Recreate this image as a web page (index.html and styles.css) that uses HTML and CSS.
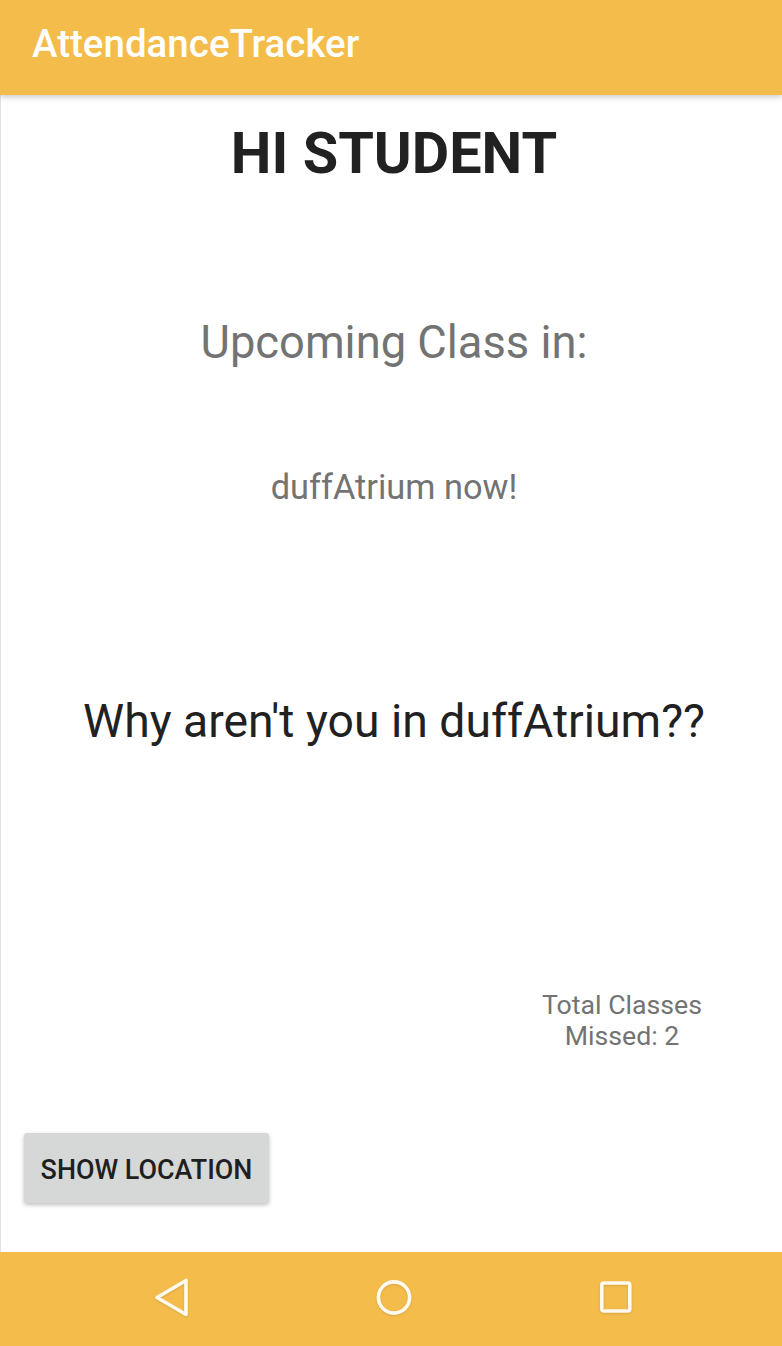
FILE: index.html
```html
<!DOCTYPE html>
<html>
<head>
<meta charset="utf-8">
<link rel="stylesheet" href="styles.css">
</head>
<body>
<div class="screen">
  <header class="appbar">
    <div class="appbar-title">AttendanceTracker</div>
  </header>
  <main class="content">
    <h1 class="greeting">HI STUDENT</h1>
    <div class="upcoming">Upcoming Class in:</div>
    <div class="location-now">duffAtrium now!</div>
    <div class="question">Why aren't you in duffAtrium??</div>
    <div class="missed">Total Classes<br>Missed: 2</div>
    <button class="show-location">SHOW LOCATION</button>
  </main>
  <nav class="navbar">
    <svg class="nav-icon" width="40" height="40" viewBox="0 0 40 40">
      <path d="M5 19.5 L34 2.5 L34 36.5 Z" fill="none" stroke="#fffaf0" stroke-width="3.6" stroke-linejoin="round"/>
    </svg>
    <svg class="nav-icon" width="40" height="40" viewBox="0 0 40 40">
      <circle cx="20" cy="19.5" r="15.6" fill="none" stroke="#fffaf0" stroke-width="3.6"/>
    </svg>
    <svg class="nav-icon" width="40" height="40" viewBox="0 0 40 40">
      <rect x="5.8" y="5" width="28" height="28" rx="2" fill="none" stroke="#fffaf0" stroke-width="3.6"/>
    </svg>
  </nav>
</div>
</body>
</html>
```
FILE: styles.css
```css
* { box-sizing: border-box; }
html, body {
  margin: 0;
  padding: 0;
  background: #ffffff;
}
.screen {
  width: 782px;
  height: 1346px;
  display: flex;
  flex-direction: column;
  font-family: Roboto, "Noto Sans", sans-serif;
  overflow: hidden;
}
.appbar {
  height: 95px;
  flex: none;
  background: #f4bc4b;
  padding: 24px 0 0 32px;
  position: relative;
  z-index: 2;
  box-shadow: 0 2px 6px rgba(0,0,0,0.22);
}
.appbar-title {
  color: #ffffff;
  font-size: 38.5px;
  line-height: 40px;
  font-weight: 500;
}
.content {
  flex: 1;
  display: flex;
  flex-direction: column;
  align-items: center;
  border-left: 1px solid #e2e2e2;
  padding-left: 5px;
  position: relative;
}
.greeting {
  margin: 29px 0 0 0;
  font-size: 57.6px;
  line-height: 60px;
  font-weight: 700;
  color: #212121;
}
.upcoming {
  margin-top: 134px;
  font-size: 45.3px;
  line-height: 50px;
  color: #737373;
}
.location-now {
  margin-top: 99px;
  font-size: 34.4px;
  line-height: 40px;
  color: #737373;
}
.question {
  margin-top: 189px;
  font-size: 46.3px;
  line-height: 50px;
  color: #212121;
}
.missed {
  margin-top: 244px;
  align-self: flex-end;
  width: 200px;
  margin-right: 60px;
  text-align: center;
  font-size: 26.7px;
  line-height: 31px;
  color: #737373;
}
.show-location {
  align-self: flex-start;
  margin: 81px 0 0 18px;
  width: 245px;
  height: 70px;
  border: none;
  border-radius: 3px;
  background: #d6d7d7;
  box-shadow: 0 2px 4px rgba(0,0,0,0.25);
  font-family: Roboto, "Noto Sans", sans-serif;
  font-size: 26.9px;
  font-weight: 500;
  color: #1f1f1f;
  padding: 4px 0 0 0;
}
.navbar {
  height: 94px;
  flex: none;
  background: #f4bc4b;
  display: flex;
  align-items: center;
  justify-content: center;
  gap: 182px;
  padding-left: 6px;
  padding-bottom: 2px;
}
.nav-icon {
  display: block;
  filter: drop-shadow(0 1px 1px rgba(0,0,0,0.12));
}
```
